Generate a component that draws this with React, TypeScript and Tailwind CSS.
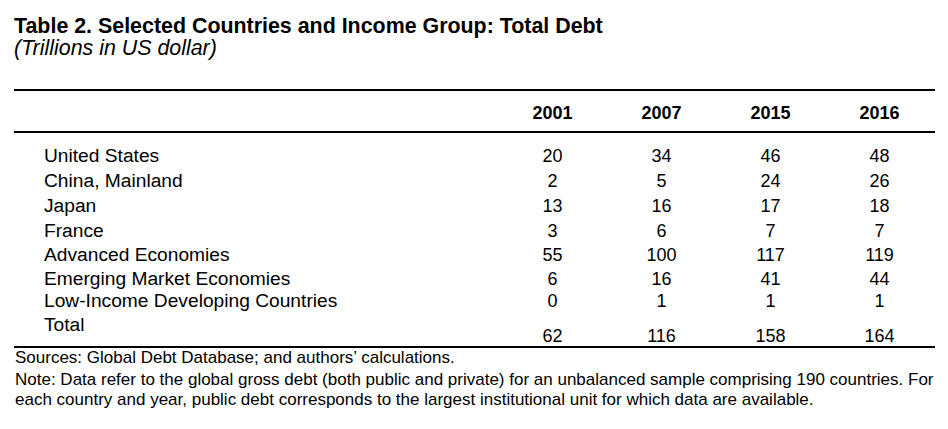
const years = ["2001", "2007", "2015", "2016"];

const rows: { name: string; values: number[]; h: string }[] = [
  { name: "United States", values: [20, 34, 46, 48], h: "h-[25px]" },
  { name: "China, Mainland", values: [2, 5, 24, 26], h: "h-[25px]" },
  { name: "Japan", values: [13, 16, 17, 18], h: "h-[25px]" },
  { name: "France", values: [3, 6, 7, 7], h: "h-[24px]" },
  { name: "Advanced Economies", values: [55, 100, 117, 119], h: "h-[24px]" },
  { name: "Emerging Market Economies", values: [6, 16, 41, 44], h: "h-[22px]" },
  { name: "Low-Income Developing Countries", values: [0, 1, 1, 1], h: "h-[24px]" },
];

const total = [62, 116, 158, 164];

const grid = "grid grid-cols-[484px_repeat(4,109px)]";

export default function App() {
  return (
    <div className="w-[948px] h-[429px] bg-white text-black font-['Liberation_Sans',Arial,sans-serif] pl-[14px] pt-[15px]">
      <div className="text-[21.4px] leading-[22px] font-bold">
        Table 2. Selected Countries and Income Group: Total Debt
      </div>
      <div className="text-[21.4px] leading-[22px] italic">(Trillions in US dollar)</div>

      <div className="w-[921px] mt-[30px] border-t-2 border-black">
        {/* header */}
        <div className={`${grid} pt-[11px] pb-[7px] text-[18px] leading-[22px] font-bold border-b-2 border-black`}>
          <div />
          {years.map((y) => (
            <div key={y} className="text-center">
              {y}
            </div>
          ))}
        </div>

        {/* body */}
        <div className="pt-[11px] text-[18px] leading-[24px]">
          {rows.map((r) => (
            <div key={r.name} className={`${grid} ${r.h}`}>
              <div className="pl-[30px] whitespace-nowrap text-[19.2px]">{r.name}</div>
              {r.values.map((v, i) => (
                <div key={i} className="text-center">
                  {v}
                </div>
              ))}
            </div>
          ))}
          <div className={`${grid} h-[33px]`}>
            <div className="pl-[30px] text-[19.2px]">Total</div>
            {total.map((v, i) => (
              <div key={i} className="text-center pt-[13px] leading-[20px]">
                {v}
              </div>
            ))}
          </div>
        </div>

        {/* notes */}
        <div className="border-t-2 border-black pl-px text-[17px] leading-[20px]">
          <p>Sources: Global Debt Database; and authors’ calculations.</p>
          <p className="mt-[2px]">
            Note: Data refer to the global gross debt (both public and private) for an unbalanced sample comprising 190
            countries. For each country and year, public debt corresponds to the largest institutional unit for which data
            are available.
          </p>
        </div>
      </div>
    </div>
  );
}
